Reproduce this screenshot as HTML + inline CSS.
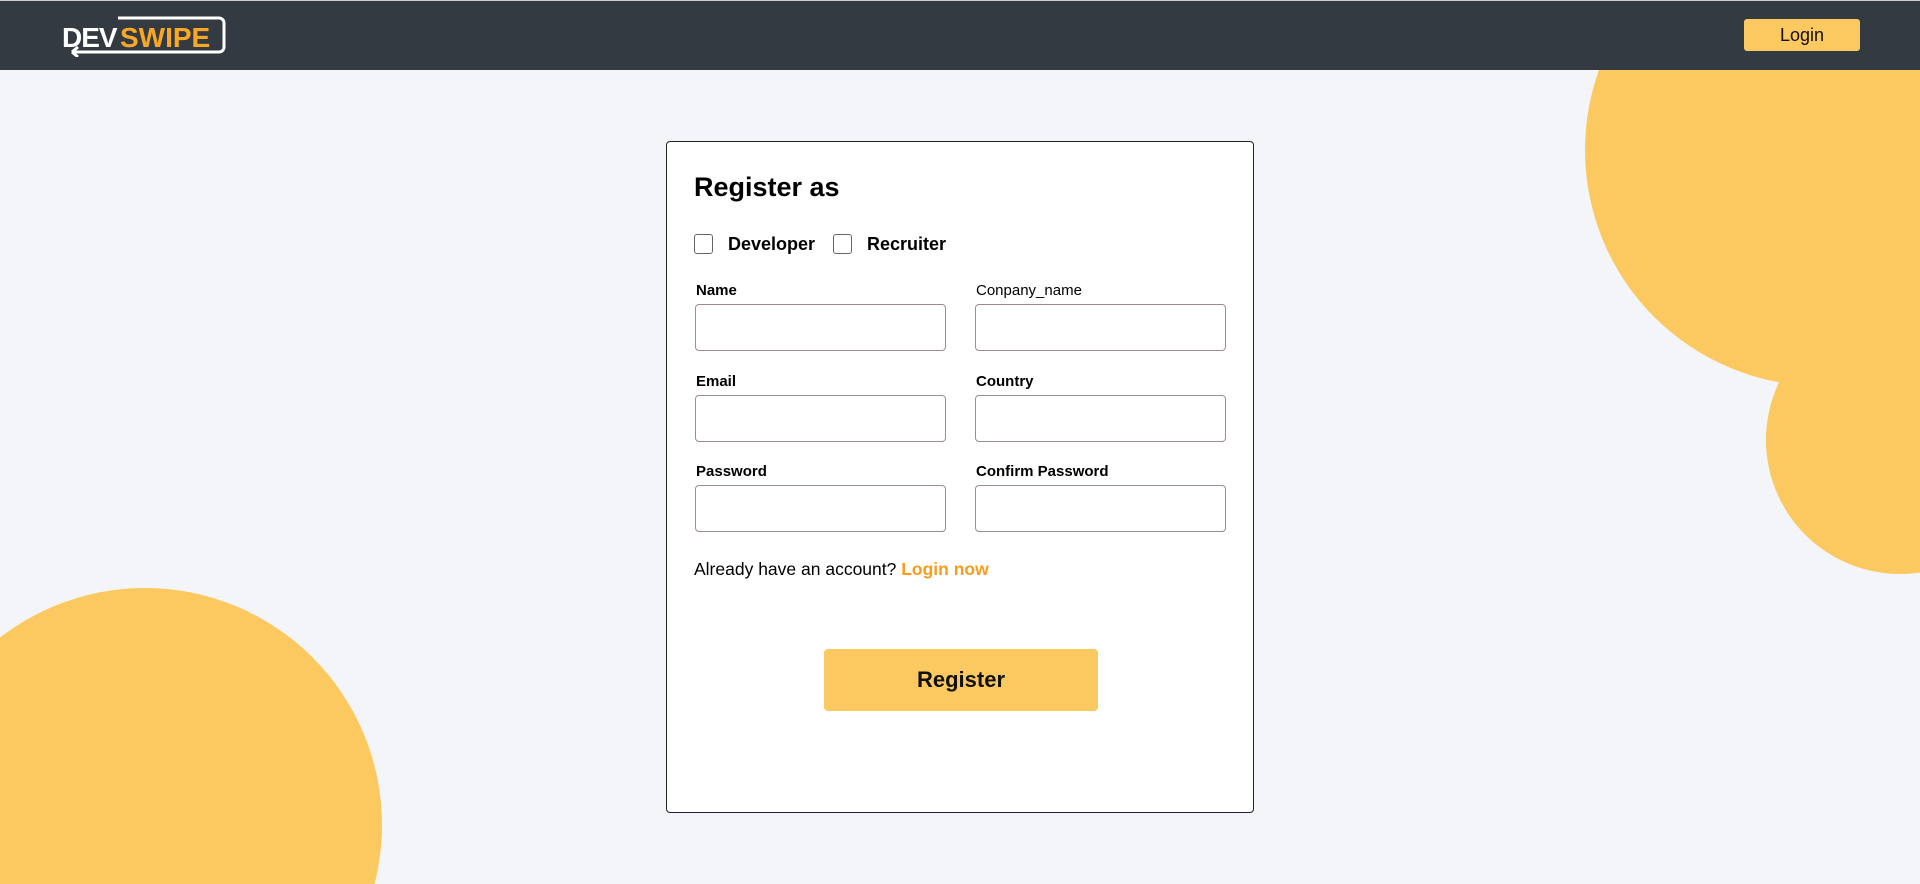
<!DOCTYPE html>
<html><head><meta charset="utf-8"><style>
*{box-sizing:border-box;margin:0;padding:0}
html,body{width:1920px;height:884px;overflow:hidden}
body{background:#f3f5f9;font-family:"Liberation Sans",Arial,sans-serif}
.wrap{position:relative;width:1920px;height:884px;overflow:hidden}
.hdr{position:absolute;left:0;top:0;width:1920px;height:70px;background:#343a42;border-top:1px solid #ccc;z-index:2}
.circ{position:absolute;border-radius:50%;background:#fcc860}
.login{position:absolute;left:1744px;top:18px;width:116px;height:32px;background:#fcc860;border-radius:3px;font-size:18px;text-align:center;line-height:32px;color:#111}
.card{position:absolute;left:666px;top:141px;width:588px;height:672px;background:#fff;border:1px solid #222;border-radius:4px}
h1{position:absolute;left:27px;top:30px;font-size:27px;font-weight:bold;color:#000}
.cb{position:absolute;top:92px;width:19px;height:20px;border:1.5px solid #666;border-radius:3px}
.cbl{position:absolute;top:92px;font-size:18px;font-weight:bold;color:#000}
.lab{position:absolute;font-size:15px;font-weight:bold;color:#000}
.inp{position:absolute;width:251px;height:47px;border:1px solid #a08a8e;border-radius:4px}
.acc{position:absolute;left:27px;top:417px;font-size:17.5px;color:#000}
.acc b{color:#f99c1c}
.reg{position:absolute;left:157px;top:507px;width:274px;height:62px;background:#fcc860;border-radius:4px;text-align:center;line-height:62px;font-size:22px;font-weight:bold;color:#111}
</style></head><body><div class="wrap">
<div class="circ" style="left:1585px;top:-86px;width:472px;height:472px"></div>
<div class="circ" style="left:1766px;top:306px;width:268px;height:268px"></div>
<div class="circ" style="left:-92px;top:588px;width:474px;height:474px"></div>
<div class="hdr">
<svg style="position:absolute;left:58px;top:14px" width="170" height="42" viewBox="0 0 170 42">
<path d="M60 3 H161 a5 5 0 0 1 5 5 V32 a5 5 0 0 1 -5 5 H14" fill="none" stroke="#fff" stroke-width="3"/>
<path d="M14 37 l6 -5 M14 37 l6 5" stroke="#fff" stroke-width="3" fill="none"/>
<text x="4" y="32" font-family="Liberation Sans" font-weight="bold" font-size="28" fill="#fff" letter-spacing="-1">DEV</text>
<text x="62" y="32" font-family="Liberation Sans" font-weight="bold" font-size="28" fill="#f9a825">SWIPE</text>
</svg>
<div class="login">Login</div>
</div>
<div class="card">
<h1>Register as</h1>
<div class="cb" style="left:27px"></div><div class="cbl" style="left:61px">Developer</div>
<div class="cb" style="left:166px"></div><div class="cbl" style="left:200px">Recruiter</div>
<div class="lab" style="left:29px;top:140px">Name</div>
<div class="lab" style="left:309px;top:140px;font-weight:normal">Conpany_name</div>
<div class="inp" style="left:28px;top:162px"></div><div class="inp" style="left:308px;top:162px"></div>
<div class="lab" style="left:29px;top:231px">Email</div>
<div class="lab" style="left:309px;top:231px">Country</div>
<div class="inp" style="left:28px;top:253px"></div><div class="inp" style="left:308px;top:253px"></div>
<div class="lab" style="left:29px;top:321px">Password</div>
<div class="lab" style="left:309px;top:321px">Confirm Password</div>
<div class="inp" style="left:28px;top:343px"></div><div class="inp" style="left:308px;top:343px"></div>
<div class="acc">Already have an account? <b>Login now</b></div>
<div class="reg">Register</div>
</div>
</div></body></html>
